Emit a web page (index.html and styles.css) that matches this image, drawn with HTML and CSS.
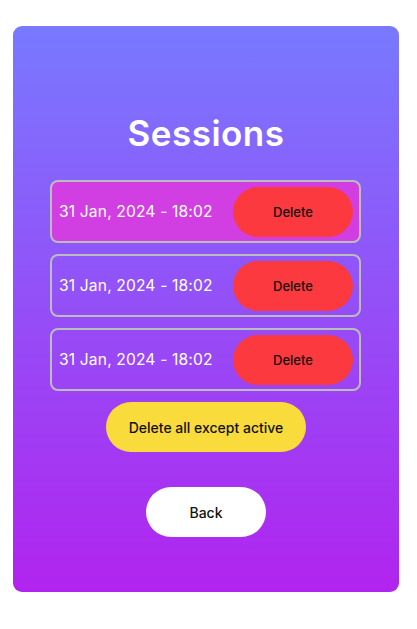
FILE: index.html
```html
<!DOCTYPE html>
<html lang="en">
<head>
<meta charset="utf-8">
<title>Sessions</title>
<link rel="stylesheet" href="styles.css">
</head>
<body>
<main class="card">
  <h1 class="title">Sessions</h1>
  <ul class="sessions">
    <li class="session session--active">
      <span class="session__date">31 Jan, 2024 - 18:02</span>
      <button class="btn btn--delete">Delete</button>
    </li>
    <li class="session">
      <span class="session__date">31 Jan, 2024 - 18:02</span>
      <button class="btn btn--delete">Delete</button>
    </li>
    <li class="session">
      <span class="session__date">31 Jan, 2024 - 18:02</span>
      <button class="btn btn--delete">Delete</button>
    </li>
  </ul>
  <button class="btn btn--all">Delete all except active</button>
  <button class="btn btn--back">Back</button>
</main>
</body>
</html>
```
FILE: styles.css
```css
* { box-sizing: border-box; }
html, body { margin: 0; padding: 0; background: #fff; }
body {
  font-family: Inter, "Liberation Sans", sans-serif;
  padding: 26px 18px 0 13px;
}
.card {
  width: 386px;
  height: 566px;
  border-radius: 9px;
  background: linear-gradient(180deg, #7879ff 0%, #b124ef 100%);
  display: flex;
  flex-direction: column;
  align-items: center;
  padding-top: 80px;
}
.title {
  margin: 0 0 20px;
  font-size: 35px;
  line-height: 54px;
  font-weight: 600;
  color: #fff;
  letter-spacing: 0.5px;
}
.sessions {
  list-style: none;
  margin: 0;
  padding: 0;
  width: 311px;
  margin-left: -1px;
  display: flex;
  flex-direction: column;
  gap: 11px;
}
.session {
  height: 63px;
  border: 2px solid #bcbcbc;
  border-radius: 8px;
  display: flex;
  align-items: center;
  justify-content: space-between;
  padding: 0 6px 0 7px;
}
.session--active { background: #d13fe3; }
.session__date {
  color: #fff;
  font-size: 15.6px;
  letter-spacing: 0.15px;
}
.btn {
  border: none;
  border-radius: 25px;
  height: 50px;
  font-family: inherit;
  font-size: 13px;
  font-weight: 500;
  color: #111;
  padding: 0;
  cursor: pointer;
}
.btn--delete { width: 120px; background: #fb393e; }
.btn--all {
  width: 200px;
  margin-top: 11px;
  background: #f9dc3c;
  font-size: 14px;
}
.btn--back {
  width: 120px;
  margin-top: 35px;
  background: #fff;
  font-size: 14px;
}
```
